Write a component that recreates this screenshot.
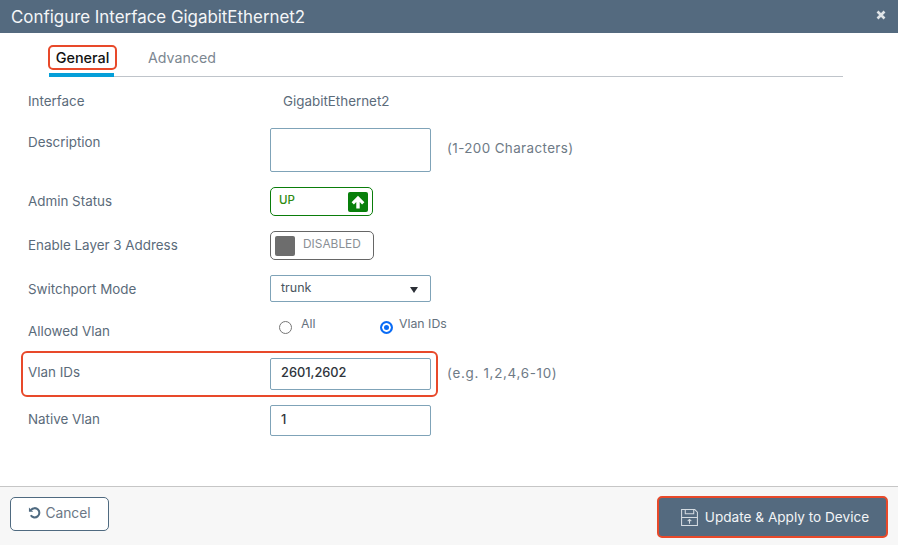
<div class="modal">
  <header class="head">
    <h1>Configure Interface GigabitEthernet2</h1>
    <svg class="close" viewBox="0 0 10 10" width="10" height="10" aria-hidden="true"><path d="M1.5 1.5l7 7M8.5 1.5l-7 7" stroke="#dfe4e8" stroke-width="2.6"/></svg>
  </header>

  <nav class="tabs">
    <div class="tab active"><span class="mark">General</span></div>
    <div class="tab">Advanced</div>
  </nav>

  <main class="form">
    <div class="row r-iface">
      <span class="lab">Interface</span>
      <span class="val">GigabitEthernet2</span>
    </div>
    <div class="row r-desc">
      <span class="lab">Description</span>
      <div class="input tall"></div>
      <span class="hint">(1-200 Characters)</span>
    </div>
    <div class="row r-admin">
      <span class="lab">Admin Status</span>
      <div class="toggle up">
        <span class="t-text">UP</span>
        <span class="knob green">
          <svg viewBox="0 0 14 14" width="16" height="16" aria-hidden="true"><path d="M7 1.6L12.6 7.2 10.6 9.1 8.5 7V12.6H5.5V7L3.4 9.1 1.4 7.2Z" fill="#fff"/></svg>
        </span>
      </div>
    </div>
    <div class="row r-l3">
      <span class="lab">Enable Layer 3 Address</span>
      <div class="toggle off">
        <span class="knob gray"></span>
        <span class="t-text">DISABLED</span>
      </div>
    </div>
    <div class="row r-mode">
      <span class="lab">Switchport Mode</span>
      <div class="input select">
        <span>trunk</span>
        <svg viewBox="0 0 8 6" width="8" height="6" aria-hidden="true"><path d="M0 0H8L4 6Z" fill="#2b2f36"/></svg>
      </div>
    </div>
    <div class="row r-radio">
      <span class="lab">Allowed Vlan</span>
      <div class="radios">
        <div class="radio-item first"><span class="radio"></span><span class="r-label">All</span></div>
        <div class="radio-item"><span class="radio on"></span><span class="r-label">Vlan IDs</span></div>
      </div>
    </div>
    <div class="row r-vlan">
      <span class="lab">Vlan IDs</span>
      <div class="input short strong">2601,2602</div>
      <span class="hint wide">(e.g. 1,2,4,6-10)</span>
    </div>
    <div class="row r-native">
      <span class="lab">Native Vlan</span>
      <div class="input short strong">1</div>
    </div>
  </main>

  <footer class="foot">
    <button class="btn cancel">
      <svg viewBox="0 0 14 14" width="13" height="13" aria-hidden="true"><path d="M3.3 4.2A5 5 0 1 1 3 10" fill="none" stroke="#4f6a80" stroke-width="2.2"/><path d="M1 1.6V6.2H5.6Z" fill="#4f6a80"/></svg>
      Cancel
    </button>
    <button class="btn apply">
      <svg viewBox="0 0 18 18" width="19" height="19" aria-hidden="true" fill="none" stroke="#d5dce2" stroke-width="1"><path d="M1.5 1.5H14L16.5 4V16.5H1.5Z"/><path d="M5 1.5V5.5H13V1.5"/><path d="M1.5 9H16.5"/><path d="M9 15V11M7.3 12.5L9 10.8 10.7 12.5"/></svg>
      Update &amp; Apply to Device
    </button>
  </footer>
</div>

<style>
  :global(body) { margin: 0; background: #fff; }
  .modal {
    width: 898px; height: 545px; display: flex; flex-direction: column; overflow: hidden;
    font-family: Inter, "Liberation Sans", sans-serif; font-size: 13.4px; color: #5b6b7a; background: #fff;
  }
  .head {
    height: 33px; flex: none; background: #546a7f; color: #fff; display: flex; align-items: center;
    justify-content: space-between; padding: 0 12px 0 11px; box-sizing: border-box;
  }
  h1 { margin: 0; font-size: 16.9px; font-weight: 400; color: #f4f6f8; }
  .close { margin-top: -3px; }
  .tabs {
    flex: none; height: 44px; margin: 0 55px 0 49px; display: flex; border-bottom: 1px solid #bfc4ca; box-sizing: border-box;
    gap: 20px; font-size: 14.2px; color: #7c8791;
  }
  .tab { display: flex; padding: 12px 0 0; box-sizing: border-box; height: 44px; line-height: 26px; }
  .tab.active { width: 65px; border-bottom: 4px solid #049fd9; margin-right: 14px; position: relative; color: #111; }
  .mark {
    position: absolute; left: -1px; top: 12px; width: 69px; height: 25px; box-sizing: border-box;
    border: 2px solid #e8492a; border-radius: 5px; text-align: center; line-height: 21px; font-size: 14.4px; font-weight: 500;
  }
  .form { flex: 1; display: flex; flex-direction: column; padding-left: 28px; }
  .row { display: flex; align-items: center; position: relative; }
  .lab { width: 242px; flex: none; }
  .val { margin-left: 13px; }
  .r-iface { height: 24px; margin-top: 12px; }
  .r-desc { height: 44px; margin-top: 15px; align-items: flex-start; }
  .r-desc .lab { line-height: 28px; }
  .r-desc .hint { line-height: 40px; }
  .r-admin { height: 29px; margin-top: 15px; }
  .r-admin .lab, .r-l3 .lab { margin-top: -2px; }
  .r-l3 { height: 29px; margin-top: 15px; }
  .r-mode { height: 27px; margin-top: 15px; }
  .r-radio { height: 30px; margin-top: 13px; }
  .r-radio .lab { padding-top: 2px; }
  .r-vlan { height: 32px; margin-top: 13px; }
  .r-vlan .lab, .r-native .lab { margin-top: -4px; }
  .r-vlan::before {
    content: ""; position: absolute; left: -7px; top: -7px; width: 417px; height: 46px; box-sizing: border-box;
    border: 2px solid #e8492a; border-radius: 6px; pointer-events: none;
  }
  .r-native { height: 31px; margin-top: 15px; }
  .input {
    width: 161px; box-sizing: border-box; border: 1px solid #7fa3b8; border-radius: 2px; background: #fff;
    padding: 0 10px; display: flex; align-items: center; color: #4b5560; flex: none;
  }
  .tall { height: 44px; }
  .select { height: 27px; justify-content: space-between; padding-right: 12px; font-size: 12.5px; }
  .select span { margin-top: -2px; }
  .select svg { margin-top: 2px; }
  .short { height: 100%; padding-bottom: 3px; }
  .strong { font-weight: 500; font-size: 12.8px; color: #2f353c; }
  .hint { margin-left: 16px; color: #6e7a86; letter-spacing: .4px; }
  .hint.wide { letter-spacing: .7px; margin-top: -3px; }
  .toggle {
    box-sizing: border-box; height: 29px; border-radius: 5px; background: #fff; display: flex; align-items: center;
    border: 1px solid; font-size: 11.5px;
  }
  .up { width: 103px; border-color: #0a7d0a; color: #2f8a10; justify-content: space-between; padding: 0 4px 0 8px; font-weight: 500; }
  .up .t-text { margin-top: -4px; }
  .off { width: 104px; border-color: #666; color: #8a8f95; padding-left: 4px; gap: 8px; font-size: 11.9px; }
  .off .t-text { margin-top: -5px; }
  .knob { width: 20px; height: 20px; border-radius: 2px; display: flex; align-items: center; justify-content: center; }
  .green { background: #087f0b; }
  .gray { background: #6d6d6d; }
  .radios { display: flex; padding-left: 9px; margin-top: -8px; }
  .radio-item { display: flex; align-items: flex-start; font-size: 12.3px; color: #66727e; }
  .radio-item.first { width: 101px; }
  .radio { width: 13px; height: 13px; border: 1px solid #767676; border-radius: 50%; box-sizing: border-box; margin-right: 9px; margin-top: 3px; }
  .radio.on { border: 2px solid #0a6cf5; background: #0a6cf5; box-shadow: inset 0 0 0 2px #fff; margin-right: 6px; }
  .r-label { line-height: 14px; margin-top: -1px; }
  .foot {
    height: 59px; flex: none; box-sizing: border-box; border-top: 1px solid #c6c6c6; background: #f7f7f7;
    display: flex; justify-content: space-between; align-items: flex-start; padding: 8px 10px;
  }
  .btn { font: inherit; font-size: 14px; display: flex; align-items: center; justify-content: center; box-sizing: border-box; }
  .cancel { width: 99px; height: 34px; margin-top: 2px; background: #fff; border: 1px solid #4f6a80; border-radius: 5px; color: #6b7785; gap: 4px; padding: 0 0 3px; font-size: 13.8px; }
  .apply { width: 231px; height: 42px; margin: 1px 0 0 0; background: #546a7f; border: 2px solid #e8492a; border-radius: 5px; color: #f2f4f6; gap: 6px; font-size: 13.6px; padding: 0 0 0 4px; }
</style>
